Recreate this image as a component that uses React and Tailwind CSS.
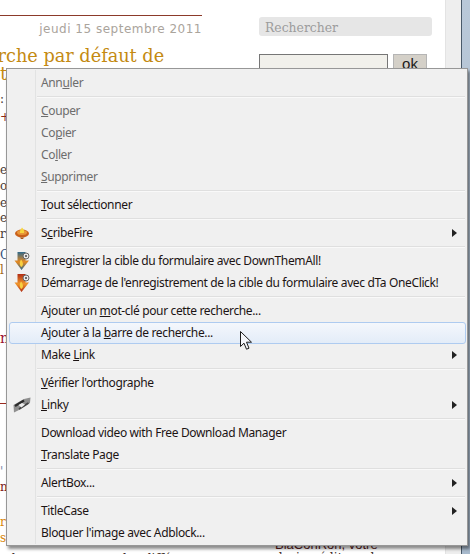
import { Fragment } from 'react';

const MENU_FONT = "font-['Noto_Sans',sans-serif] text-[12px] tracking-[-0.36px]";

function LampIcon() {
  return (
    <svg width="16" height="16" viewBox="0 0 16 16">
      <ellipse cx="8" cy="8.500" rx="7" ry="4" fill="#c9601a" />
      <ellipse cx="8" cy="7.500" rx="5" ry="2.500" fill="#e8963a" />
      <path d="M8 2.500c1.500 1.500 2.500 3.500 2 5.500H6c-.5-2 1-4 2-5.500z" fill="#f8d63c" />
      <path d="M6 12.500h4l-1 1.500H7z" fill="#a5561c" />
    </svg>
  );
}

function ArrowIcon({ id, top, mid }) {
  return (
    <svg width="16" height="20" viewBox="0 0 16 20">
      <defs>
        <linearGradient id={id} x1="0" y1="0" x2="0" y2="1">
          <stop offset="0" stopColor={top} />
          <stop offset="0.55" stopColor={mid} />
          <stop offset="1" stopColor={top} />
        </linearGradient>
      </defs>
      <path d="M3.500 1h8v8.500H15L7.500 19 .5 9.500h3z" fill={`url(#${id})`} />
      <path d="M7.500 16c-2-1.500-2.500-4-.5-7.500 2.500 3 2.500 6 .5 7.500z" fill="#f8d040" />
      <circle cx="12" cy="5" r="3" fill="#e8e8e8" stroke="#666" strokeWidth="1" />
      <circle cx="12" cy="5" r="1" fill="#444" />
    </svg>
  );
}

function ChainIcon() {
  return (
    <svg width="18" height="16" viewBox="0 0 18 16">
      <path d="M.5 8l10.500-6 6.500-1.500-.5 5.500L7 12.500 1 15.500z" fill="#8f8f8f" />
      <path d="M2 9l9-5.500" stroke="#2a2a2a" strokeWidth="2.200" />
      <path d="M6 12l9.500-6" stroke="#444" strokeWidth="1.800" />
      <path d="M5.500 8l3 2.500 3.500-3-3-1.500z" fill="#ededed" />
    </svg>
  );
}

function SubArrow() {
  return (
    <svg width="5" height="8" viewBox="0 0 5 8" className="ml-auto mr-[8px] shrink-0">
      <path d="M0 0l5 4-5 4z" fill="#222" />
    </svg>
  );
}

function Cursor() {
  return (
    <svg width="13" height="20" viewBox="0 0 13 20" className="absolute left-[240px] top-[331px]">
      <path d="M.5.5v15l3.500-3.300 2.500 6 2.500-1-2.500-6h5z" fill="#f4f6fa" stroke="#1b1b1b" strokeWidth="1" />
    </svg>
  );
}

function Item({ children, icon, disabled, active, sub }) {
  return (
    <div className={`relative h-[22px] flex items-center ${disabled ? 'text-[#6d6d6d]' : 'text-[#1c1414]'}`}>
      {active && (
        <div className="absolute left-0 right-[-1px] inset-y-0 rounded-[3px] border border-[#aecbf0] bg-gradient-to-b from-[#f4f7fc] to-[#e3ecf8]" />
      )}
      <div className="relative w-[26px] mr-[6px] shrink-0 flex justify-center">{icon}</div>
      <span className="relative whitespace-nowrap">{children}</span>
      {sub && <SubArrow />}
    </div>
  );
}

function Sep() {
  return (
    <div className="h-[6px] pl-[28px] pt-[2px]">
      <div className="h-px bg-[#dfdfdf]" />
      <div className="h-px bg-[#f9f9f9]" />
    </div>
  );
}

const groups = [
  [{ label: <>Ann<u>u</u>ler</>, disabled: true }],
  [
    { label: <><u>C</u>ouper</>, disabled: true },
    { label: <>Co<u>p</u>ier</>, disabled: true },
    { label: <>Co<u>l</u>ler</>, disabled: true },
    { label: <><u>S</u>upprimer</>, disabled: true },
  ],
  [{ label: <><u>T</u>out sélectionner</> }],
  [{ label: <>S<u>c</u>ribeFire</>, icon: <LampIcon />, sub: true }],
  [
    { label: 'Enregistrer la cible du formulaire avec DownThemAll!', icon: <ArrowIcon id="dta" top="#2f6a8c" mid="#e88a20" /> },
    { label: "Démarrage de l'enregistrement de la cible du formulaire avec dTa OneClick!", icon: <ArrowIcon id="dta1" top="#b02c14" mid="#f0962c" /> },
  ],
  [
    { label: <>Ajouter un <u>m</u>ot-clé pour cette recherche...</> },
    { label: <>Ajouter à la <u>b</u>arre de recherche...</>, active: true },
    { label: <>Make <u>L</u>ink</>, sub: true },
  ],
  [
    { label: <><u>V</u>érifier l'orthographe</> },
    { label: <><u>L</u>inky</>, icon: <ChainIcon />, sub: true },
  ],
  [
    { label: 'Download video with Free Download Manager' },
    { label: <><u>T</u>ranslate Page</> },
  ],
  [{ label: 'AlertBox...', sub: true }],
  [
    { label: 'TitleCase', sub: true },
    { label: "Bloquer l'image avec Adblock..." },
  ],
];

function ContextMenu() {
  return (
    <div className={`absolute left-[6px] top-[68px] w-[462px] h-[478px] border border-[#979797] bg-[#f0f0f0] pt-[3px] px-[2px] shadow-[2px_3px_3px_rgba(0,0,0,0.45)] ${MENU_FONT}`}>
      <div className="absolute left-[28px] inset-y-[1px] w-px bg-[#e2e3e3]" />
      <div className="relative">
        {groups.map((group, i) => (
          <Fragment key={i}>
            {i > 0 && <Sep />}
            {group.map((it, j) => (
              <Item key={j} icon={it.icon} disabled={it.disabled} active={it.active} sub={it.sub}>
                {it.label}
              </Item>
            ))}
          </Fragment>
        ))}
      </div>
    </div>
  );
}

// what is left of the article text between the window edge and the menu
function ArticleEdge() {
  const row = "h-[15px] leading-[15px] whitespace-nowrap";
  return (
    <div className="w-[6px] overflow-hidden font-['DejaVu_Serif',serif] text-[12px] text-[#4a3a34]">
      <div className={`${row} mt-[12px]`}>:</div>
      <div className={`${row} mt-[3px] text-[#8c2a1a]`}>+</div>
      <div className={`${row} mt-[38px]`}>e</div>
      <div className={`${row} mt-[1px]`}>o</div>
      <div className={`${row} mt-[2px]`}>e</div>
      <div className={`${row}`}>er</div>
      <div className={`${row} mt-[1px]`}>r</div>
      <div className={`${row} mt-[6px] text-[#33507a]`}>C</div>
      <div className={`${row} text-[#a06a1a]`}>l</div>
      <div className={`${row} mt-[53px] text-[#9a1030] text-[14px]`}>n</div>
      <div className="mt-[57px] h-px bg-[#9a2a20]" />
      <div className={`${row} mt-[61px] text-[#7a88a8]`}>'</div>
      <div className={`${row} text-[#7a1a20]`}>nl</div>
      <div className={`${row} mt-[20px] text-[#d8860a]`}>re</div>
      <div className={`${row} mt-[1px] text-[#d8860a]`}>s</div>
    </div>
  );
}

function Page() {
  return (
    <div className="flex h-full">
      {/* article column, its left edge is cut by the window */}
      <div className="w-[259px] shrink-0 overflow-hidden">
        <div className="w-[202px] mt-[15px] h-px bg-[#8c3a2a]" />
        <div className="w-[202px] mt-[4px] text-right font-['DejaVu_Sans',sans-serif] text-[12px] tracking-[0.5px] text-[#aaa49c]">
          jeudi 15 septembre 2011
        </div>
        <div className="mt-[6px] ml-[-58px] w-[300px] font-['DejaVu_Serif',serif] text-[17.7px] leading-[24px] text-[#c48a12] whitespace-nowrap">
          Recherche par défaut de
        </div>
        <div className="font-['DejaVu_Serif',serif] text-[18px] leading-[12px] text-[#c48a12]">t</div>
        <ArticleEdge />
        <div className="mt-[5px] ml-[8px] whitespace-nowrap font-['DejaVu_Serif',serif] text-[12px] leading-[16px] text-[#3a2a24]">
          des moteurs entre les différents
        </div>
      </div>

      {/* sidebar */}
      <div className="w-[186px] shrink-0">
        <div className="mt-[17px] w-[173px] h-[19px] rounded-[3px] bg-[#e6e6e6] pl-[6px] font-['DejaVu_Serif',serif] text-[12.4px] leading-[21px] text-[#9c9c9c]">
          Rechercher
        </div>
        <div className="mt-[18px] flex gap-[5px]">
          <div className="w-[129px] h-[30px] border border-[#767676] border-b-0 bg-[#f1f0eb]" />
          <div className="w-[34px] h-[30px] bg-[#d4d0c8] border border-[#b5b5b5] text-center font-['Liberation_Sans',sans-serif] text-[15px] leading-[17px] text-[#1a1a1a]">
            ok
          </div>
        </div>
        <div className="mt-[455px] ml-[16px] whitespace-nowrap font-['Liberation_Sans',sans-serif] text-[13px] leading-[11px] text-[#5a1a20]">
          BlaConRon, votre
        </div>
        <div className="ml-[16px] whitespace-nowrap font-['DejaVu_Serif',serif] text-[12px] leading-[16px] text-[#3a2a24]">
          design éditeur de
        </div>
      </div>

      {/* window edge */}
      <div className="w-[16px] shrink-0 bg-[#eeeeee] border-l border-[#e3e3e3]" />
      <div className="flex-1 bg-gradient-to-b from-[#b9c8d8] to-[#a8bacd] border-l border-[#4a5a6a]" />
    </div>
  );
}

export default function App() {
  return (
    <div className="relative w-[470px] h-[554px] overflow-hidden bg-white">
      <Page />
      <ContextMenu />
      <Cursor />
    </div>
  );
}
